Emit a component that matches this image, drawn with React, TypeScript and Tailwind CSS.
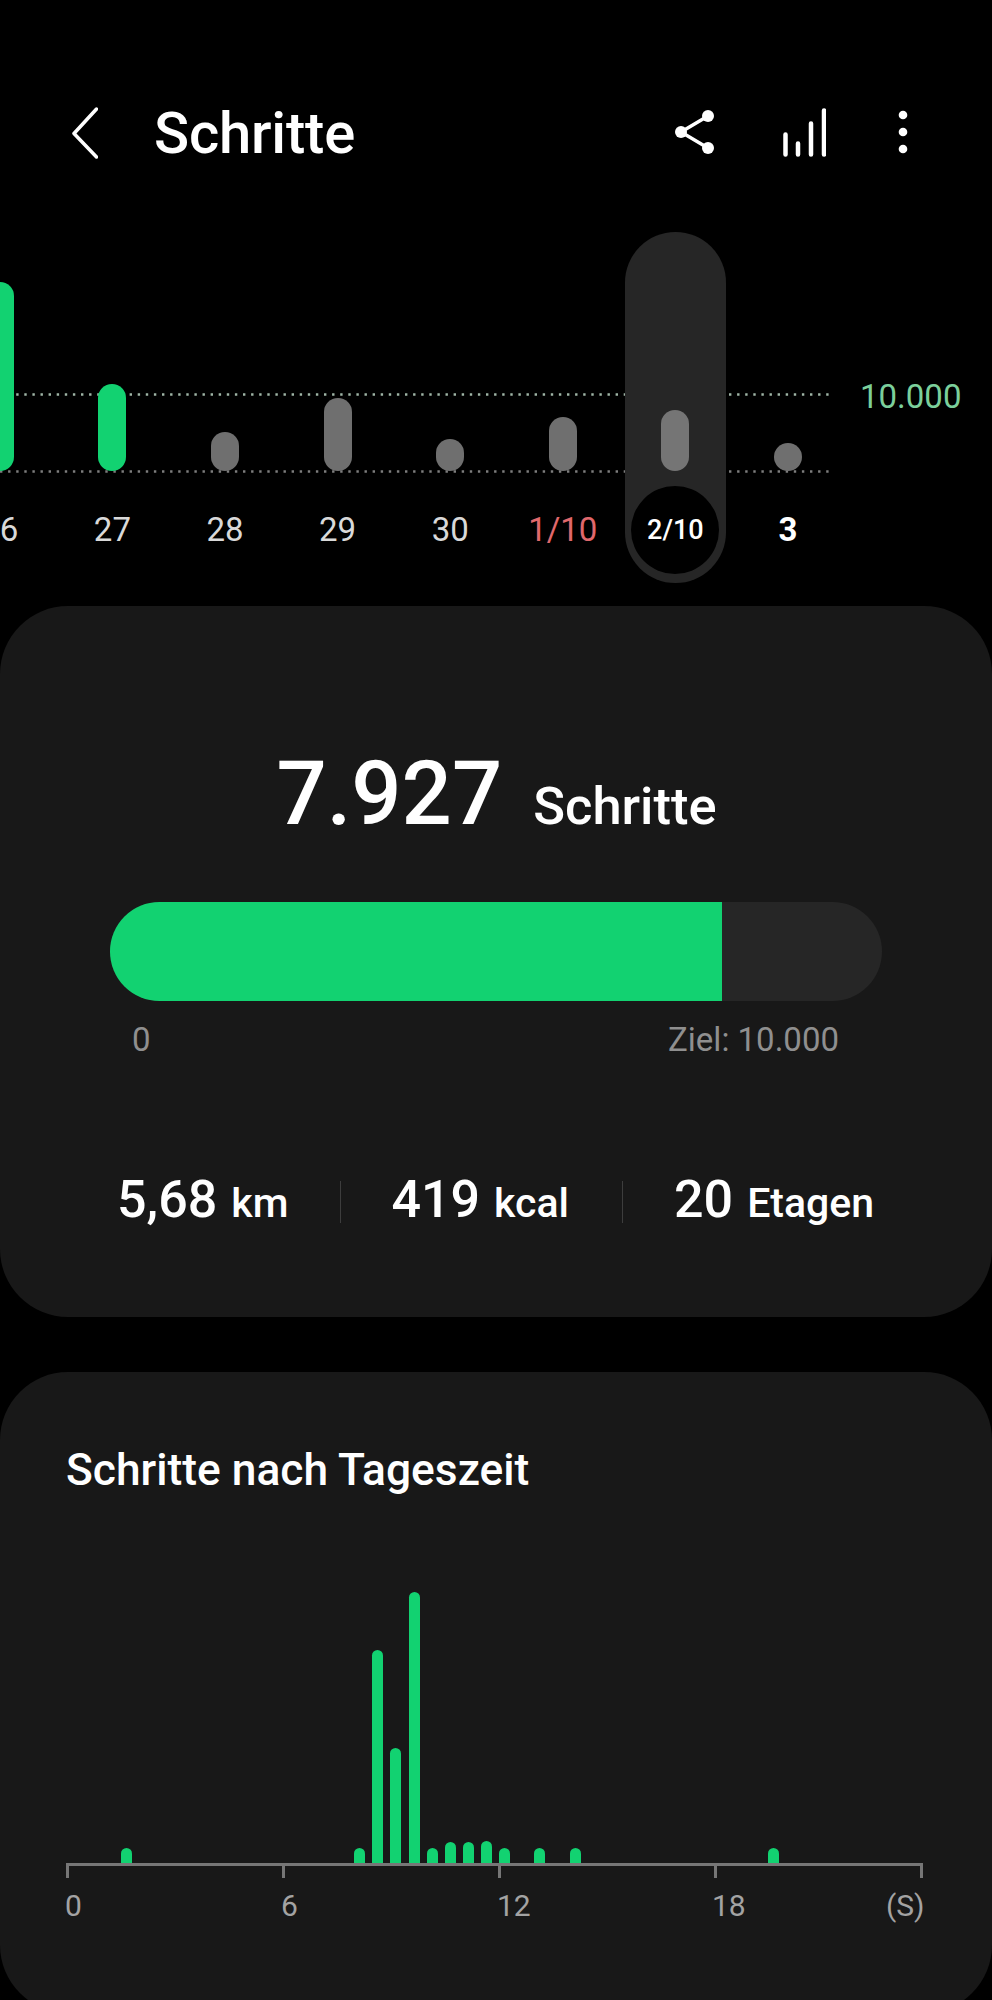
const font = "font-['Roboto','Liberation_Sans',sans-serif]";

const days = [
  { label: "26", top: 189, color: "bg-[#12d271]", text: "text-[#d9d9d9]" },
  { label: "27", top: 87, color: "bg-[#12d271]", text: "text-[#d9d9d9]" },
  { label: "28", top: 39, color: "bg-[#6f6f6f]", text: "text-[#d9d9d9]" },
  { label: "29", top: 73, color: "bg-[#6f6f6f]", text: "text-[#d9d9d9]" },
  { label: "30", top: 32, color: "bg-[#6f6f6f]", text: "text-[#d9d9d9]" },
  { label: "1/10", top: 54, color: "bg-[#6f6f6f]", text: "text-[#e0686c]" },
  { label: "2/10", top: 61, color: "bg-[#757575]", text: "text-white", selected: true },
  { label: "3", top: 28, color: "bg-[#6f6f6f]", text: "text-white font-bold" },
];

// x = centre of the bar, h = height above the axis
const hourly = [
  { x: 126, h: 15 },
  { x: 359, h: 15 },
  { x: 377, h: 213 },
  { x: 395, h: 115 },
  { x: 414, h: 271 },
  { x: 432, h: 15 },
  { x: 450, h: 21 },
  { x: 468, h: 21 },
  { x: 486, h: 22 },
  { x: 504, h: 15 },
  { x: 539, h: 15 },
  { x: 575, h: 15 },
  { x: 773, h: 15 },
];

const ticks = [65.5, 281.5, 497.5, 714, 920];
const tickLabels = [
  { text: "0", w: "w-[216px]" },
  { text: "6", w: "w-[216px]" },
  { text: "12", w: "w-[215px]" },
  { text: "18", w: "w-[174px]" },
  { text: "(S)", w: "w-auto" },
];

function Header() {
  return (
    <header className="flex h-[232px] items-start justify-between pl-[72px] pr-[84px] pt-[107px]">
      <div className="flex items-center">
        <svg width="26" height="52" viewBox="0 0 26 52" fill="none" stroke="white" strokeWidth="3.5" strokeLinecap="round" strokeLinejoin="round">
          <path d="M24.5 2 2 26.5 24.5 50" />
        </svg>
        <h1 className="ml-[56px] text-[58px] font-medium leading-[52px] tracking-[-0.2px] text-white">Schritte</h1>
      </div>
      <div className="flex items-center">
        <svg width="40" height="52" viewBox="0 0 40 52" fill="white">
          <path d="M33 9 6 25l27 16" fill="none" stroke="white" strokeWidth="3.5" />
          <circle cx="33" cy="9" r="6" />
          <circle cx="6" cy="25" r="6" />
          <circle cx="33" cy="41" r="6" />
        </svg>
        <svg className="ml-[68px]" width="43" height="52" viewBox="0 0 43 52" fill="none" stroke="white" strokeWidth="4.5" strokeLinecap="round">
          <path d="M2.5 27.5v20M15 36.5v11M28 16.5v31M41 3.5v44" />
        </svg>
        <svg className="ml-[72px]" width="10" height="52" viewBox="0 0 10 52" fill="white">
          <circle cx="5" cy="8" r="4.3" />
          <circle cx="5" cy="25" r="4.3" />
          <circle cx="5" cy="42" r="4.3" />
        </svg>
      </div>
    </header>
  );
}

function DayColumn({ label, top, color, text, selected }: (typeof days)[number]) {
  return (
    <div className="relative flex w-[112.6px] shrink-0 flex-col items-center">
      {selected && (
        <div className="absolute left-[6px] top-0 h-[351px] w-[101px] rounded-full bg-[#262626]" />
      )}
      <div className="relative flex h-[239px] items-end">
        <div className={`w-[28px] rounded-full ${color}`} style={{ height: top }} />
      </div>
      <div className="relative mt-[15px] flex h-[88px] w-[88px] items-center justify-center">
        {selected && <div className="absolute inset-0 rounded-full bg-black" />}
        <span className={`relative whitespace-nowrap ${selected ? "text-[27px] font-medium" : "text-[33px]"} ${text}`}>
          {label}
        </span>
      </div>
    </div>
  );
}

function WeekChart() {
  return (
    <section className="relative h-[374px] overflow-hidden">
      <svg className="absolute left-0 top-[161px]" width="830" height="80" fill="none" strokeWidth="2.4" strokeDasharray="2.4 5.7">
        <line x1="0" y1="1.5" x2="830" y2="1.5" stroke="#9fb5a6" />
        <line x1="0" y1="78.5" x2="830" y2="78.5" stroke="#7d7d7d" />
      </svg>
      <div className="relative ml-[-56.5px] flex">
        {days.map((d) => (
          <DayColumn key={d.label} {...d} />
        ))}
      </div>
      <span className="absolute left-[860px] top-[146px] text-[33px] leading-[38px] text-[#7bcf9b]">10.000</span>
    </section>
  );
}

function Stat({ value, unit }: { value: string; unit: string }) {
  return (
    <div className="flex items-baseline whitespace-nowrap font-medium text-white">
      <span className="text-[52px] leading-[60px]">{value}</span>
      <span className="ml-[14px] text-[41px] leading-[60px]">{unit}</span>
    </div>
  );
}

function SummaryCard() {
  return (
    <section className="h-[711px] rounded-[68px] bg-[#181818] pt-[138px]">
      <div className="flex h-[100px] items-baseline justify-center">
        <span className="ml-[1px] text-[88.5px] font-medium leading-[100px] text-white">7.927</span>
        <span className="ml-[31px] text-[52.5px] font-medium leading-[100px] text-white">Schritte</span>
      </div>
      <div className="mx-[110px] mt-[58px] flex h-[99px] overflow-hidden rounded-full bg-[#262626]">
        <div className="h-full w-[612px] bg-[#12d271]" />
      </div>
      <div className="mt-[20px] flex justify-between pl-[132px] pr-[153px] text-[33px] leading-[38px] text-[#8f8f8f]">
        <span>0</span>
        <span>Ziel: 10.000</span>
      </div>
      <div className="mt-[111px] flex items-center pl-[117px]">
        <Stat value="5,68" unit="km" />
        <div className="ml-[52px] h-[42px] w-[1px] bg-[#3d3d3d]" />
        <div className="ml-[50px]">
          <Stat value="419" unit="kcal" />
        </div>
        <div className="ml-[53px] h-[42px] w-[1px] bg-[#3d3d3d]" />
        <div className="ml-[51px]">
          <Stat value="20" unit="Etagen" />
        </div>
      </div>
    </section>
  );
}

function HourlyCard() {
  return (
    <section className="mt-[55px] h-[641px] rounded-[68px] bg-[#181818] pt-[73px]">
      <h2 className="ml-[66px] text-[44.3px] font-medium leading-[50px] text-white">Schritte nach Tageszeit</h2>
      <div className="relative mt-[96px] h-[272px]">
        {hourly.map((b) => (
          <div
            key={b.x}
            className="absolute bottom-0 w-[11px] rounded-t-full bg-[#12d271]"
            style={{ left: b.x - 5.5, height: b.h }}
          />
        ))}
      </div>
      <div className="relative ml-[65.5px] h-[3px] w-[857px] bg-[#767676]">
        {ticks.map((t) => (
          <div key={t} className="absolute top-0 h-[15px] w-[3px] bg-[#767676]" style={{ left: t - 65.5 }} />
        ))}
      </div>
      <div className="ml-[65px] mt-[22px] flex text-[30px] leading-[36px] text-[#a3a3a3]">
        {tickLabels.map((l) => (
          <span key={l.text} className={l.w}>
            {l.text}
          </span>
        ))}
      </div>
    </section>
  );
}

export default function App() {
  return (
    <main className={`h-[2000px] w-[992px] overflow-hidden bg-black ${font}`}>
      <Header />
      <WeekChart />
      <SummaryCard />
      <HourlyCard />
    </main>
  );
}
